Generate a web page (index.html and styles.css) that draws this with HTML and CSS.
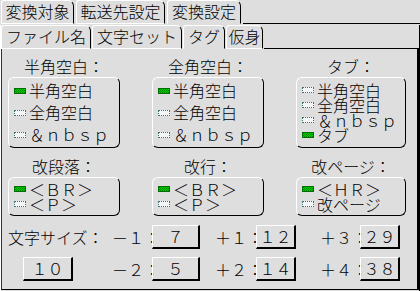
FILE: index.html
```html
<!DOCTYPE html>
<html lang="ja">
<head>
  <meta charset="UTF-8" />
  <title>変換設定</title>
  <link rel="stylesheet" href="styles.css">
</head>
<body>
  <div class="tabs top">
    <div class="tab w73">変換対象</div>
    <div class="tab w89">転送先設定</div>
    <div class="tab w74 active">変換設定</div>
    <div class="tab-fill"></div>
  </div>
  <div class="panel outer">
    <div class="tabs sub">
      <div class="tab w90">ファイル名</div>
      <div class="tab w90">文字セット</div>
      <div class="tab w42 active">タグ</div>
      <div class="tab w37">仮身</div>
      <div class="tab-fill"></div>
    </div>
    <div class="panel inner">
      <div class="groups">
        <div class="label">半角空白：</div>
        <div class="label">全角空白：</div>
        <div class="label">タブ：</div>

        <div class="box wide">
          <div class="item"><span class="radio on"></span>半角空白</div>
          <div class="item"><span class="radio"></span>全角空白</div>
          <div class="item"><span class="radio"></span>＆ｎｂｓｐ</div>
        </div>
        <div class="box wide">
          <div class="item"><span class="radio on"></span>半角空白</div>
          <div class="item"><span class="radio"></span>全角空白</div>
          <div class="item"><span class="radio"></span>＆ｎｂｓｐ</div>
        </div>
        <div class="box">
          <div class="item"><span class="radio"></span>半角空白</div>
          <div class="item"><span class="radio"></span>全角空白</div>
          <div class="item"><span class="radio"></span>＆ｎｂｓｐ</div>
          <div class="item"><span class="radio on"></span>タブ</div>
        </div>

        <div class="label low">改段落：</div>
        <div class="label low">改行：</div>
        <div class="label low">改ページ：</div>

        <div class="box">
          <div class="item"><span class="radio on"></span>＜ＢＲ＞</div>
          <div class="item"><span class="radio"></span>＜Ｐ＞</div>
        </div>
        <div class="box">
          <div class="item"><span class="radio on"></span>＜ＢＲ＞</div>
          <div class="item"><span class="radio"></span>＜Ｐ＞</div>
        </div>
        <div class="box">
          <div class="item"><span class="radio on"></span>＜ＨＲ＞</div>
          <div class="item"><span class="radio"></span>改ページ</div>
        </div>
      </div>

      <div class="sizes">
        <div class="caption">文字サイズ：</div>
        <div class="caption">－１：</div>
        <div class="btn">７</div>
        <div></div>
        <div class="caption">＋１：</div>
        <div class="btn">１２</div>
        <div></div>
        <div class="caption">＋３：</div>
        <div class="btn">２９</div>

        <div class="btn base">１０</div>
        <div class="caption">－２：</div>
        <div class="btn">５</div>
        <div></div>
        <div class="caption">＋２：</div>
        <div class="btn">１４</div>
        <div></div>
        <div class="caption">＋４：</div>
        <div class="btn">３８</div>
      </div>
    </div>
  </div>
</body>
</html>
```

FILE: styles.css
```css
html, body {
  margin: 0;
  background: #dedede;
}
body {
  width: 420px;
  height: 291px;
  overflow: hidden;
  font-family: "Noto Sans CJK JP", "Noto Sans", sans-serif;
  font-size: 16px;
  font-weight: 300;
  color: #000;
}

/* tab rows */
.tabs {
  display: flex;
  align-items: flex-end;
}
.tabs.top {
  height: 24px;
  padding-left: 1px;
}
.tabs.sub {
  height: 24px;
  margin-top: 1px;
}
.tab {
  box-sizing: border-box;
  height: 24px;
  line-height: 21px;
  text-align: center;
  margin-right: 2px;
  border-top: 1px solid #fff;
  border-left: 1px solid #fff;
  border-right: 1px solid #000;
  border-bottom: 1px solid #fff;
  border-radius: 3px 6px 0 0;
  white-space: nowrap;
}
.tabs.sub .tab {
  margin-right: 1px;
}
.w37 { width: 37px; }
.w42 { width: 42px; }
.w73 { width: 73px; }
.w74 { width: 74px; }
.w89 { width: 89px; }
.w90 { width: 90px; }
.tab.active {
  border-bottom-color: #dedede;
}
.tab-fill {
  flex: 1;
  align-self: stretch;
  border-bottom: 1px solid #000;
}

/* panels */
.panel {
  box-sizing: border-box;
  border-left: 1px solid #fff;
  border-right: 1px solid #000;
  border-bottom: 1px solid #000;
}
.panel.outer {
  height: 267px;
}
.panel.inner {
  height: 241px;
  padding: 7px 0 0 6px;
  border-left-color: #333;
  border-right-width: 2px;
}

/* radio groups */
.groups {
  display: grid;
  grid-template-columns: 112px 112px 110px;
  grid-template-rows: 21px 71px 29px 39px;
  column-gap: 32px;
}
.label {
  text-align: center;
  line-height: 21px;
  white-space: nowrap;
}
.label.low {
  align-self: end;
}
.box {
  box-sizing: border-box;
  border: 1px solid;
  border-color: #fff #000 #000 #fff;
  border-radius: 6px;
  padding-left: 5px;
  display: flex;
  flex-direction: column;
  justify-content: center;
}
.item {
  display: flex;
  align-items: center;
  height: 15px;
  line-height: 15px;
  white-space: nowrap;
}
.box.wide .item {
  height: 22px;
}
.radio {
  box-sizing: border-box;
  width: 12px;
  height: 6px;
  margin-right: 3px;
  border: 1px dotted #3f6f6f;
  background: #f2f6f6;
  flex: none;
}
.radio.on {
  border: 1px solid #007000;
  background: repeating-conic-gradient(#00d000 0 25%, #008800 0 50%) 0 0 / 2px 2px;
}

/* font size buttons */
.sizes {
  display: grid;
  grid-template-columns: 104px 40px 48px 15px 41px 40px 24px 40px 40px;
  grid-auto-rows: 24px;
  row-gap: 8px;
  margin-top: 9px;
}
.caption {
  line-height: 24px;
  white-space: nowrap;
}
.btn {
  box-sizing: border-box;
  height: 24px;
  line-height: 21px;
  text-align: center;
  border-top: 1px solid #fff;
  border-left: 1px solid #fff;
  border-right: 2px solid #000;
  border-bottom: 2px solid #000;
  white-space: nowrap;
}
.btn.base {
  width: 50px;
  margin-left: 15px;
}
```
